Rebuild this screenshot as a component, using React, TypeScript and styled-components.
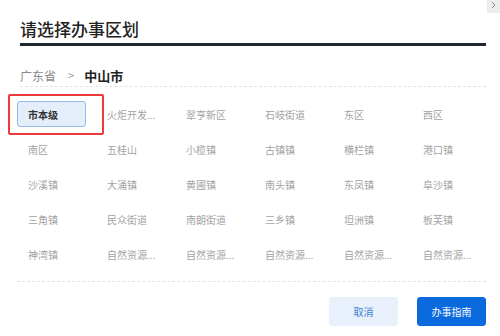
import React from "react";
import styled, {createGlobalStyle} from "styled-components";

const GlobalStyle = createGlobalStyle`
  body {
    margin: 0;
    background: #fff;
    font-family: "Noto Sans CJK SC", "Noto Sans", sans-serif;
  }
`

const Dialog = styled.div`
  position: relative;
  width: 500px;
  height: 336px;
  padding: 0 14px 0 20px;
  box-sizing: border-box;
  overflow: hidden;
`

const CloseButton = styled.div`
  position: absolute;
  top: 0;
  right: 0;
  width: 13px;
  height: 13px;
  background: #ececec;
  display: flex;
  align-items: flex-start;
  justify-content: flex-end;
`

const Title = styled.h1`
  margin: 0;
  padding-top: 17px;
  padding-bottom: 2px;
  font-size: 17px;
  line-height: 24px;
  font-weight: 500;
  color: #222;
  border-bottom: 3px solid #1f2733;
`

const Breadcrumb = styled.div`
  display: flex;
  align-items: center;
  margin-top: 19px;
  height: 20px;
  padding-bottom: 1px;
  border-bottom: 1px dashed #e4e4e4;
`

const Crumb = styled.span<{ current?: boolean }>`
  font-size: ${({current}) => current ? "13px" : "12px"};
  font-weight: ${({current}) => current ? 700 : 400};
  color: ${({current}) => current ? "#222" : "#8a8a8a"};
`

const Separator = styled.span`
  margin: 0 10px 0 12px;
  font-size: 11px;
  color: #999;
`

const Grid = styled.div`
  display: grid;
  grid-template-columns: repeat(6, 69px);
  grid-auto-rows: 26px;
  column-gap: 10px;
  row-gap: 9px;
  margin: 14px 0 0 -3px;
  padding-bottom: 14px;
  border-bottom: 1px dashed #e4e4e4;
`

const Cell = styled.div<{ selected?: boolean }>`
  position: relative;
  display: flex;
  align-items: center;
  padding-left: 10px;
  box-sizing: border-box;
  font-size: 10px;
  white-space: nowrap;
  border-radius: 3px;
  color: ${({selected}) => selected ? "#333" : "#a3a3a3"};
  font-weight: ${({selected}) => selected ? 700 : 400};
  background: ${({selected}) => selected ? "#e4eefa" : "transparent"};
  border: 1px solid ${({selected}) => selected ? "#92bbee" : "transparent"};
`

const Highlight = styled.div`
  position: absolute;
  left: -10px;
  top: -8px;
  width: 96px;
  height: 41px;
  box-sizing: border-box;
  border: 2px solid #ee3a3a;
  border-radius: 2px;
  pointer-events: none;
`

const Footer = styled.div`
  display: flex;
  justify-content: flex-end;
  gap: 19px;
  margin-top: 15px;
`

const Button = styled.button<{ primary?: boolean }>`
  width: 69px;
  height: 29px;
  border-radius: 3px;
  font-family: inherit;
  font-size: 10px;
  cursor: pointer;
  border: 1px solid ${({primary}) => primary ? "#0a68db" : "#e8f1fb"};
  background: ${({primary}) => primary ? "#0b6ade" : "#e8f1fb"};
  color: ${({primary}) => primary ? "#fff" : "#3f7fd6"};
`

const districts = [
    "市本级", "火炬开发...", "翠亨新区", "石岐街道", "东区", "西区",
    "南区", "五桂山", "小榄镇", "古镇镇", "横栏镇", "港口镇",
    "沙溪镇", "大涌镇", "黄圃镇", "南头镇", "东凤镇", "阜沙镇",
    "三角镇", "民众街道", "南朗街道", "三乡镇", "坦洲镇", "板芙镇",
    "神湾镇", "自然资源...", "自然资源...", "自然资源...", "自然资源...", "自然资源...",
];

export default function App() {
    return (
        <Dialog>
            <GlobalStyle/>
            <CloseButton>
                <svg width="9" height="10" viewBox="0 0 9 10">
                    <polyline points="1,2 4,5 1,8" fill="none" stroke="#8a8a8a" strokeWidth="1"/>
                </svg>
            </CloseButton>
            <Title>请选择办事区划</Title>
            <Breadcrumb>
                <Crumb>广东省</Crumb>
                <Separator>&gt;</Separator>
                <Crumb current>中山市</Crumb>
            </Breadcrumb>
            <Grid>
                {districts.map((name, i) => (
                    <Cell key={i} selected={i === 0}>
                        {name}
                        {i === 0 && <Highlight/>}
                    </Cell>
                ))}
            </Grid>
            <Footer>
                <Button>取消</Button>
                <Button primary>办事指南</Button>
            </Footer>
        </Dialog>
    );
}
